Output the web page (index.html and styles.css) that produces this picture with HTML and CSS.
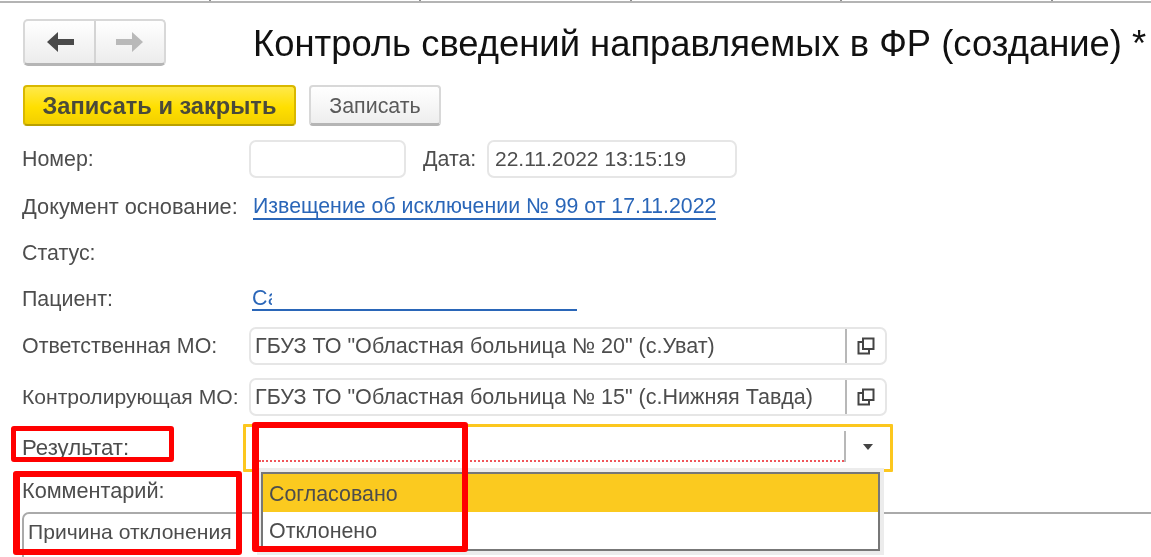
FILE: index.html
```html
<!DOCTYPE html>
<html lang="ru">
<head>
<meta charset="utf-8">
<title>Контроль сведений</title>
<link rel="stylesheet" href="styles.css">
</head>
<body>
<div class="page">
  <div class="topstrip"><i></i><i></i><i></i><i></i><i></i></div>
  <header class="head">
    <div class="nav">
      <span class="nav-btn nav-back">
        <svg width="28" height="22" viewBox="0 0 28 22"><path d="M12 1 L1 11 L12 21 L12 14 L28 14 L28 8 L12 8 Z" fill="#4a4a4a"/></svg>
      </span>
      <span class="nav-btn nav-fwd">
        <svg width="28" height="22" viewBox="0 0 28 22"><path d="M16 1 L27 11 L16 21 L16 14 L0 14 L0 8 L16 8 Z" fill="#b9b9b9"/></svg>
      </span>
    </div>
    <h1 class="title">Контроль сведений направляемых в ФР (создание) *</h1>
  </header>
  <div class="actions">
    <button class="btn btn-primary">Записать и закрыть</button>
    <button class="btn btn-plain">Записать</button>
  </div>
  <div class="row row-num">
    <span class="label">Номер:</span>
    <span class="field field-num"></span>
    <span class="label-date">Дата:</span>
    <span class="field field-date">22.11.2022 13:15:19</span>
  </div>
  <div class="row row-doc">
    <span class="label label-long">Документ основание:</span>
    <a class="link link-doc">Извещение об исключении № 99 от 17.11.2022</a>
  </div>
  <div class="row row-status"><span class="label">Статус:</span></div>
  <div class="row row-patient">
    <span class="label">Пациент:</span>
    <a class="link link-patient"><span class="clip">Са</span></a>
  </div>
  <div class="row row-resp">
    <span class="label">Ответственная МО:</span>
    <div class="field field-wide">
      <span class="value">ГБУЗ ТО "Областная больница № 20" (с.Уват)</span>
      <span class="open">
        <svg width="20" height="20" viewBox="0 0 20 20"><path d="M7 2.5 H17.5 V13 H7 Z M7 6 H2.5 V17.5 H13 V13" fill="none" stroke="#444" stroke-width="2"/></svg>
      </span>
    </div>
  </div>
  <div class="row row-ctrl">
    <span class="label label-ctrl">Контролирующая МО:</span>
    <div class="field field-wide">
      <span class="value">ГБУЗ ТО "Областная больница № 15" (с.Нижняя Тавда)</span>
      <span class="open">
        <svg width="20" height="20" viewBox="0 0 20 20"><path d="M7 2.5 H17.5 V13 H7 Z M7 6 H2.5 V17.5 H13 V13" fill="none" stroke="#444" stroke-width="2"/></svg>
      </span>
    </div>
  </div>
  <div class="row row-result">
    <span class="label label-result">Результат:</span>
    <div class="select">
      <span class="select-value"></span>
      <span class="select-btn"><svg width="12" height="8" viewBox="0 0 12 8"><path d="M1 1 H11 L6 7 Z" fill="#444"/></svg></span>
    </div>
  </div>
  <div class="row row-comment-label"><span class="label label-comment">Комментарий:</span></div>
  <div class="comment">Причина отклонения</div>

  <div class="dropdown">
    <div class="opt opt-active">Согласовано</div>
    <div class="opt">Отклонено</div>
  </div>
  <div class="mark mark-label"></div>
  <div class="mark mark-comment"></div>
  <div class="mark mark-select"></div>
</div>
</body>
</html>
```
FILE: styles.css
```css
* { box-sizing: border-box; }
html, body { margin: 0; padding: 0; background: #fff; }
.page {
  position: relative;
  width: 1151px;
  height: 557px;
  overflow: hidden;
  background: #fff;
  font-family: "Liberation Sans", Arial, sans-serif;
  font-size: 21.4px;
  color: #4d4d4d;
  filter: blur(0.6px);
}
.topstrip {
  display: flex;
  height: 3px;
  border-bottom: 2px solid #b4b4b4;
}
.topstrip i { width: 210.5px; border-right: 2px solid #8f8f8f; flex: none; }

.head { display: flex; align-items: center; margin: 16px 0 0 23px; height: 47px; }
.nav {
  flex: none;
  display: flex;
  width: 143px;
  height: 47px;
  border: 2px solid #d8d8d8;
  border-bottom: 3px solid #b5b5b5;
  border-radius: 5px;
  background: linear-gradient(#fff, #ececec);
}
.nav-btn { display: flex; align-items: center; justify-content: center; }
.nav-back { width: 71px; border-right: 2px solid #d4d4d4; }
.nav-fwd { flex: 1; }
.title {
  margin: 0 0 0 87px;
  padding-top: 2px;
  font-weight: 400;
  font-size: 36.4px;
  color: #111;
  white-space: nowrap;
}

.actions { display: flex; gap: 13px; margin: 19px 0 0 23px; height: 41px; }
.btn {
  font-family: "Liberation Sans", Arial, sans-serif;
  padding: 2px 0 0;
  border-radius: 4px;
  cursor: default;
}
.btn-primary {
  width: 273px;
  border: 2px solid #d9b800;
  border-bottom-color: #b9a000;
  background: linear-gradient(#ffe94a, #ffdf00 55%, #f2cf00);
  font-size: 23.6px;
  font-weight: 700;
  color: #4a4a3a;
}
.btn-plain {
  width: 132px;
  border: 2px solid #d8d8d8;
  border-bottom: 3px solid #b5b5b5;
  background: linear-gradient(#fff, #eee);
  font-size: 21.4px;
  color: #5a5a5a;
}

.row { display: flex; align-items: center; margin-left: 22px; }
.label { width: 227px; flex: none; white-space: nowrap; }
.label-long { font-size: 21.8px; }
.label-ctrl { font-size: 21.1px; }
.label-comment { font-size: 21.7px; }
.label-date { margin-left: 17px; width: 64px; }
.field {
  border: 2px solid #e6e6e6;
  border-radius: 7px;
  background: #fff;
  white-space: nowrap;
}
.row-num { margin-top: 14px; height: 38px; }
.field-num { width: 157px; height: 38px; }
.field-date { width: 250px; height: 38px; padding: 0 6px; line-height: 34px; font-size: 21px; }
.row-doc { margin-top: 14px; height: 30px; }
.row-status { margin-top: 16px; height: 30px; }
.row-patient { margin-top: 16px; height: 30px; }
.link { color: #2a66b8; white-space: nowrap; }
.link-doc { margin-left: 4px; border-bottom: 2px solid #2a66b8; line-height: 23px; font-size: 21.3px; }
.link-patient { display: block; margin-left: 3px; width: 325px; height: 24px; border-bottom: 2px solid #2a66b8; line-height: 22px; }
.clip { display: block; width: 20px; overflow: hidden; }

.row-resp { margin-top: 13px; height: 38px; }
.row-ctrl { margin-top: 13px; height: 38px; }
.field-wide { display: flex; width: 638px; height: 38px; }
.value { width: 594px; padding-left: 4px; line-height: 34px; flex: none; white-space: nowrap; font-size: 21.55px; }
.open {
  flex: 1;
  display: flex;
  align-items: center;
  justify-content: center;
  border-left: 2px solid #b8b8b8;
}

.row-result { margin-top: 8px; height: 48px; }
.label-result { width: 221px; font-size: 22.2px; }
.select {
  display: flex;
  width: 650px;
  height: 48px;
  border: 3px solid #fcc71e;
  border-radius: 1px;
  padding: 4px 0 7px 13px;
}
.select-value { width: 585px; border-bottom: 2px dotted #f0555a; }
.select-btn {
  flex: 1;
  display: flex;
  align-items: center;
  justify-content: center;
  border-left: 2px solid #b8b8b8;
}
.row-comment-label { margin-top: 4px; height: 30px; }
.comment {
  margin: 6px 0 0 22px;
  width: 1140px;
  height: 70px;
  border: 2px solid #aaa;
  border-radius: 7px;
  padding: 3px 0 0 4px;
  line-height: 30px;
  font-size: 21.1px;
  white-space: nowrap;
}

.dropdown {
  position: absolute;
  left: 261px;
  top: 472px;
  width: 619px;
  height: 79px;
  border: 2px solid #777;
  background: #fff;
  box-shadow: 0 0 0 4px #ececec;
}
.opt { height: 37px; padding-left: 6px; line-height: 38px; }
.opt-active { background: #fbca1f; height: 38px; line-height: 40px; }

.mark { position: absolute; border: 5px solid #f00; border-radius: 3px; }
.mark-label { left: 11px; top: 426px; width: 163px; height: 36px; }
.mark-comment { left: 13px; top: 471px; width: 229px; height: 84px; border-width: 6px; border-left-width: 7px; }
.mark-select { left: 252px; top: 422px; width: 216px; height: 130px; border-width: 6px; border-left-width: 7px; }
```
